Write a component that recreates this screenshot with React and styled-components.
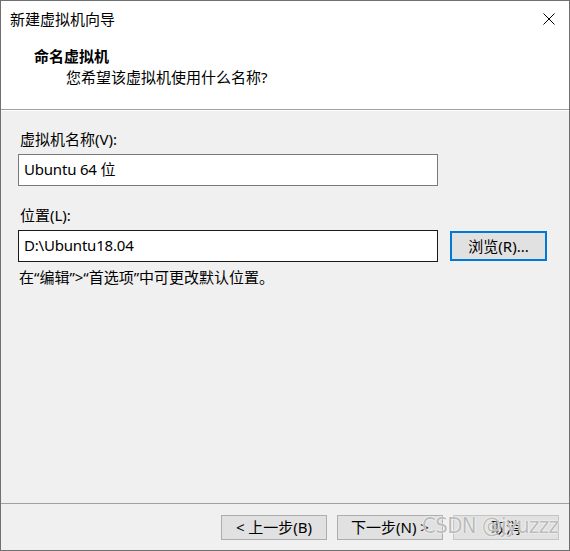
import React from "react";
import styled, { createGlobalStyle } from "styled-components";

const GlobalStyle = createGlobalStyle`
  html, body {
    margin: 0;
    padding: 0;
    background: #ffffff;
  }
  body {
    font-family: "Noto Sans", "Noto Sans CJK SC", sans-serif;
    font-size: 15px;
    color: #000;
  }
`;

const Window = styled.div`
  position: relative;
  width: 570px;
  height: 551px;
  box-sizing: border-box;
  border: 1px solid #707070;
  display: flex;
  flex-direction: column;
  background: #f0f0f0;
  overflow: hidden;
`;

const TitleBar = styled.div`
  height: 36px;
  flex: none;
  background: #fff;
  display: flex;
  align-items: center;
  justify-content: space-between;
  padding: 0 14px 0 9px;
  line-height: 36px;
`;

const CloseButton = styled.span`
  display: flex;
  width: 12px;
  height: 12px;
`;

const Header = styled.div`
  height: 73px;
  flex: none;
  box-sizing: border-box;
  background: #fff;
  padding: 9px 0 0 33px;
  border-bottom: 1px solid #a0a0a0;
`;

const Heading = styled.div`
  font-weight: 700;
  line-height: 20px;
`;

const Subtitle = styled.div`
  line-height: 20px;
  margin-top: 1px;
  padding-left: 32px;
`;

const Content = styled.div`
  flex: 1;
  display: flex;
  flex-direction: column;
  padding: 18px 0 0 17px;
  border-top: 1px solid #fff;
`;

const Label = styled.div`
  line-height: 20px;
  padding-left: 2px;
  margin-top: ${(p) => p.$top || 0}px;
`;

const Row = styled.div`
  display: flex;
  align-items: center;
  gap: 12px;
  margin-top: 5px;
`;

const TextBox = styled.div`
  width: 420px;
  height: 32px;
  box-sizing: border-box;
  background: #fff;
  border: 1px solid ${(p) => (p.$active ? "#1a1a1a" : "#7a7a7a")};
  padding: 0 5px;
  line-height: 28px;
  white-space: nowrap;
  letter-spacing: -0.2px;
`;

const Hint = styled.div`
  line-height: 20px;
  margin-top: 5px;
  padding-left: 1px;
`;

const BrowseButton = styled.div`
  width: 97px;
  height: 30px;
  box-sizing: border-box;
  background: #e1e1e1;
  border: 2px solid #0078d7;
  display: flex;
  align-items: center;
  justify-content: center;
  line-height: 26px;
`;

const Footer = styled.div`
  height: 47px;
  flex: none;
  box-sizing: border-box;
  border-top: 1px solid #a0a0a0;
  display: flex;
  justify-content: flex-end;
  gap: 10px;
  padding: 11px 10px 0 0;
`;

const Button = styled.div`
  width: 106px;
  height: 25px;
  box-sizing: border-box;
  background: #e1e1e1;
  border: 1px solid ${(p) => (p.$faded ? "#c4c4c4" : "#adadad")};
  display: flex;
  align-items: center;
  justify-content: center;
  line-height: 23px;
  white-space: nowrap;
`;

const Watermark = styled.div`
  position: absolute;
  left: 421px;
  top: 510px;
  font-family: "DejaVu Sans Condensed", "Liberation Sans", sans-serif;
  font-size: 22px;
  line-height: 30px;
  letter-spacing: -0.6px;
  color: rgba(165, 165, 165, 0.75);
  text-shadow: 0 0 1px #fff, 0 0 2px #fff;
  pointer-events: none;
  white-space: nowrap;
`;

export default function App() {
  return (
    <>
      <GlobalStyle />
      <Window>
        <TitleBar>
          <span>新建虚拟机向导</span>
          <CloseButton>
            <svg width="12" height="12" viewBox="0 0 12 12">
              <path d="M0.5 0.5 L11.5 11.5 M11.5 0.5 L0.5 11.5" stroke="#000" strokeWidth="1" fill="none" />
            </svg>
          </CloseButton>
        </TitleBar>
        <Header>
          <Heading>命名虚拟机</Heading>
          <Subtitle>您希望该虚拟机使用什么名称?</Subtitle>
        </Header>
        <Content>
          <Label>虚拟机名称(V):</Label>
          <Row>
            <TextBox>Ubuntu 64 位</TextBox>
          </Row>
          <Label $top={19}>位置(L):</Label>
          <Row>
            <TextBox $active>D:\Ubuntu18.04</TextBox>
            <BrowseButton>浏览(R)...</BrowseButton>
          </Row>
          <Hint>在“编辑”&gt;“首选项”中可更改默认位置。</Hint>
        </Content>
        <Footer>
          <Button>&lt; 上一步(B)</Button>
          <Button>下一步(N) &gt;</Button>
          <Button $faded>取消</Button>
        </Footer>
        <Watermark>CSDN @jyuzzz</Watermark>
      </Window>
    </>
  );
}
